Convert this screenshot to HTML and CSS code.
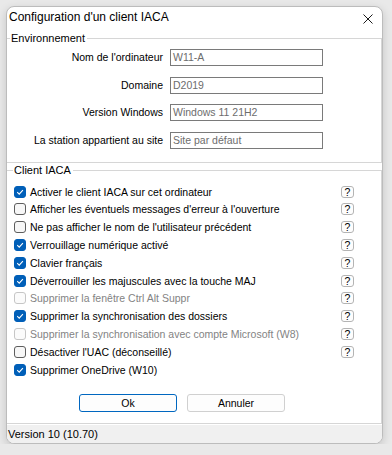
FILE: index.html
```html
<!DOCTYPE html>
<html lang="fr">

<head>
    <meta charset="UTF-8">
    <meta name="viewport" content="width=device-width, initial-scale=1.0">
    <title>Configuration d'un client IACA</title>
    <link rel="stylesheet" href="styles.css">
</head>

<body>
    <div class="window">
        <div class="titlebar">
            <span class="title">Configuration d'un client IACA</span>
            <svg class="close" width="10" height="10" viewBox="0 0 10 10">
                <path d="M0.5 0.5L9.5 9.5M9.5 0.5L0.5 9.5" stroke="#1a1a1a" stroke-width="1" fill="none" />
            </svg>
        </div>

        <fieldset class="group env">
            <legend>Environnement</legend>
            <div class="fields">
                <label>Nom de l'ordinateur</label>
                <div class="field">W11-A</div>
                <label>Domaine</label>
                <div class="field">D2019</div>
                <label>Version Windows</label>
                <div class="field">Windows 11 21H2</div>
                <label>La station appartient au site</label>
                <div class="field">Site par défaut</div>
            </div>
        </fieldset>

        <fieldset class="group client">
            <legend>Client IACA</legend>
            <ul class="options">
                <li class="option checked"><span class="box"><svg viewBox="0 0 10 10"><path d="M2.2 5.2L4.2 7.1L7.9 3.2" /></svg></span><span class="text">Activer le client IACA sur cet ordinateur</span><span class="help">?</span></li>
                <li class="option"><span class="box"></span><span class="text">Afficher les éventuels messages d'erreur à l'ouverture</span><span class="help">?</span></li>
                <li class="option"><span class="box"></span><span class="text">Ne pas afficher le nom de l'utilisateur précédent</span><span class="help">?</span></li>
                <li class="option checked"><span class="box"><svg viewBox="0 0 10 10"><path d="M2.2 5.2L4.2 7.1L7.9 3.2" /></svg></span><span class="text">Verrouillage numérique activé</span><span class="help">?</span></li>
                <li class="option checked"><span class="box"><svg viewBox="0 0 10 10"><path d="M2.2 5.2L4.2 7.1L7.9 3.2" /></svg></span><span class="text">Clavier français</span><span class="help">?</span></li>
                <li class="option checked"><span class="box"><svg viewBox="0 0 10 10"><path d="M2.2 5.2L4.2 7.1L7.9 3.2" /></svg></span><span class="text">Déverrouiller les majuscules avec la touche MAJ</span><span class="help">?</span></li>
                <li class="option disabled"><span class="box"></span><span class="text">Supprimer la fenêtre Ctrl Alt Suppr</span><span class="help">?</span></li>
                <li class="option checked"><span class="box"><svg viewBox="0 0 10 10"><path d="M2.2 5.2L4.2 7.1L7.9 3.2" /></svg></span><span class="text">Supprimer la synchronisation des dossiers</span><span class="help">?</span></li>
                <li class="option disabled"><span class="box"></span><span class="text">Supprimer la synchronisation avec compte Microsoft (W8)</span><span class="help">?</span></li>
                <li class="option"><span class="box"></span><span class="text">Désactiver l'UAC (déconseillé)</span><span class="help">?</span></li>
                <li class="option checked"><span class="box"><svg viewBox="0 0 10 10"><path d="M2.2 5.2L4.2 7.1L7.9 3.2" /></svg></span><span class="text">Supprimer OneDrive (W10)</span></li>
            </ul>
            <div class="buttons">
                <button class="btn default">Ok</button>
                <button class="btn">Annuler</button>
            </div>
        </fieldset>

        <div class="status">Version 10 (10.70)</div>
    </div>
</body>

</html>
```

FILE: styles.css
```css
body {
    margin: 0;
    background-color: #e9e9e9;
    font-family: "Segoe UI", "Liberation Sans", Arial, sans-serif;
    color: #000;
}

ul {
    list-style: none;
    margin: 0;
    padding: 0;
}

.window {
    display: flex;
    flex-direction: column;
    box-sizing: border-box;
    width: 377px;
    height: 438px;
    margin: 6px 0 0 6px;
    border: 1px solid #bcbcbc;
    border-radius: 8px;
    background-color: #fff;
    box-shadow: 0 3px 10px rgba(0, 0, 0, 0.16);
    overflow: hidden;
}

.titlebar {
    display: flex;
    justify-content: space-between;
    align-items: flex-start;
    box-sizing: border-box;
    height: 24px;
    padding: 3px 9px 0 2px;
    font-size: 12px;
    line-height: 14px;
}

.close {
    margin-top: 4px;
}

.group {
    margin: 0;
    padding: 0;
    border: 1px solid #d6d6d6;
    border-left: none;
    min-width: 0;
}

.group>legend {
    padding: 0 2px 0 1px;
    font-size: 11px;
    line-height: 15px;
}

.env>legend {
    margin-left: 3px;
}

.client>legend {
    margin-left: 6px;
}

/* Environnement */

.fields {
    display: grid;
    grid-template-columns: 156px 153px;
    column-gap: 7px;
    row-gap: 10.67px;
    padding: 3px 0 13px 0;
    font-family: "Liberation Sans", Arial, sans-serif;
    font-size: 10.5px;
}

.fields>label {
    text-align: right;
    line-height: 17px;
}

.field {
    box-sizing: border-box;
    height: 17px;
    padding-left: 2px;
    border: 1px solid #7a7a7a;
    line-height: 15px;
    color: #6d6d6d;
}

/* Client IACA */

.options {
    padding: 4.8px 27px 0 7px;
    font-family: "Liberation Sans", Arial, sans-serif;
    font-size: 10.5px;
}

.option {
    display: flex;
    align-items: center;
    height: 17.8px;
}

.option>.text {
    flex: 1;
    margin-left: 4px;
    white-space: nowrap;
}

.box {
    display: flex;
    align-items: center;
    justify-content: center;
    box-sizing: border-box;
    width: 12px;
    height: 12px;
    border: 1px solid #5d5d5d;
    border-radius: 3px;
    background-color: #f7f7f7;
}

.box>svg {
    width: 10px;
    height: 10px;
}

.box path {
    fill: none;
    stroke: #fff;
    stroke-width: 1.1;
}

.option.checked>.box {
    border-color: #005fb8;
    background-color: #005fb8;
}

.option.disabled>.box {
    border-color: #c6c6c6;
    background-color: #fbfbfb;
}

.option.disabled>.text {
    color: #838383;
}

.help {
    box-sizing: border-box;
    width: 13px;
    height: 12px;
    border: 1px solid #b4b4b4;
    border-radius: 3px;
    background-color: #fdfdfd;
    text-align: center;
    line-height: 10px;
    font-size: 10.5px;
}

.buttons {
    display: flex;
    gap: 10px;
    padding: 15.4px 0 11px 72px;
}

.btn {
    box-sizing: border-box;
    width: 98px;
    height: 18px;
    margin: 0;
    padding: 0;
    border: 1px solid #d0d0d0;
    border-radius: 3px;
    background-color: #fdfdfd;
    font-family: "Liberation Sans", Arial, sans-serif;
    font-size: 10.5px;
    color: #000;
}

.btn.default {
    border-color: #0067c0;
}

.status {
    flex: 1;
    margin-top: 1px;
    padding-left: 1px;
    background-color: #f0f0f0;
    font-size: 11px;
    line-height: 18px;
}
```
